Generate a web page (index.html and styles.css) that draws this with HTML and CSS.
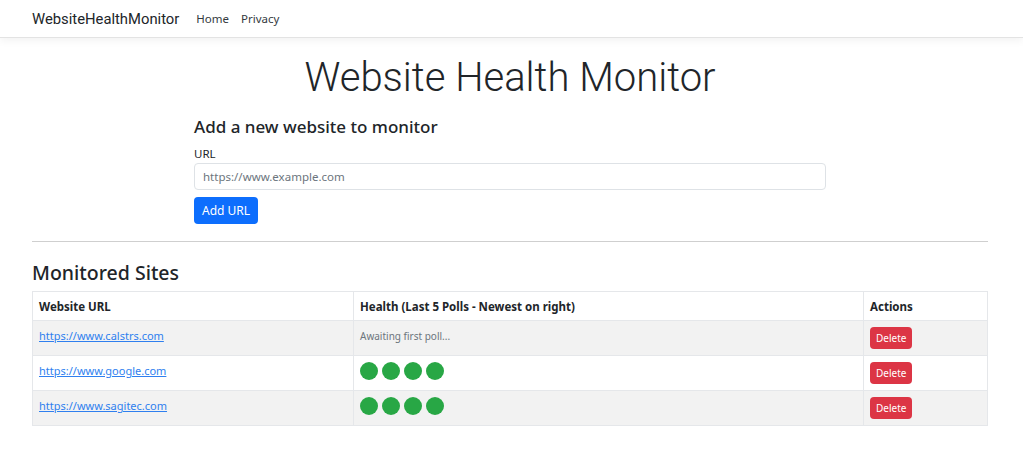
FILE: index.html
```html
<!DOCTYPE html>
<html lang="en">
<head>
<meta charset="utf-8">
<title>WebsiteHealthMonitor</title>
<link rel="stylesheet" href="styles.css">
</head>
<body>
<header class="navbar">
  <div class="nav-inner">
    <a class="brand" href="#">WebsiteHealthMonitor</a>
    <nav class="nav-links">
      <a href="#">Home</a>
      <a href="#">Privacy</a>
    </nav>
  </div>
</header>
<main class="container">
  <h1 class="title">Website Health Monitor</h1>
  <section class="add-form">
    <h4 class="form-title">Add a new website to monitor</h4>
    <label class="form-label" for="url">URL</label>
    <input class="form-control" id="url" type="text" placeholder="https://www.example.com">
    <button class="btn btn-primary">Add URL</button>
  </section>
  <hr class="divider">
  <h3 class="section-title">Monitored Sites</h3>
  <table class="sites">
    <thead>
      <tr>
        <th class="col-url">Website URL</th>
        <th class="col-health">Health (Last 5 Polls - Newest on right)</th>
        <th class="col-actions">Actions</th>
      </tr>
    </thead>
    <tbody>
      <tr class="striped">
        <td><a href="#">https://www.calstrs.com</a></td>
        <td><span class="awaiting">Awaiting first poll...</span></td>
        <td><button class="btn btn-danger">Delete</button></td>
      </tr>
      <tr>
        <td><a href="#">https://www.google.com</a></td>
        <td><div class="dots"><span class="dot"></span><span class="dot"></span><span class="dot"></span><span class="dot"></span></div></td>
        <td><button class="btn btn-danger">Delete</button></td>
      </tr>
      <tr class="striped">
        <td><a href="#">https://www.sagitec.com</a></td>
        <td><div class="dots"><span class="dot"></span><span class="dot"></span><span class="dot"></span><span class="dot"></span></div></td>
        <td><button class="btn btn-danger">Delete</button></td>
      </tr>
    </tbody>
  </table>
</main>
</body>
</html>
```
FILE: styles.css
```css
* { box-sizing: border-box; }
html, body { margin: 0; padding: 0; }
body {
  font-family: "Noto Sans", "Open Sans", sans-serif;
  color: #212529;
  background: #fff;
  font-size: 12px;
}
.navbar {
  height: 38px;
  border-bottom: 1px solid #e3e3e3;
  box-shadow: 0 3px 8px rgba(0,0,0,0.05);
  background: #fff;
}
.nav-inner {
  height: 37px;
  padding: 0 33px 0 32px;
  display: flex;
  align-items: center;
}
.brand {
  font-family: Roboto, "Noto Sans", sans-serif;
  font-size: 14.8px;
  color: #212529;
  text-decoration: none;
  margin-right: 17px;
}
.nav-links { display: flex; gap: 12px; }
.nav-links a {
  font-size: 11.5px;
  color: #343a40;
  text-decoration: none;
}
.container {
  padding: 0 35px 0 32px;
}
.title {
  margin: 14px 0 0;
  text-align: center;
  font-family: Roboto, "Noto Sans", sans-serif;
  font-size: 40px;
  font-weight: 300;
  line-height: 52px;
}
.add-form {
  width: 632px;
  margin: 12px 0 0 162px;
  display: flex;
  flex-direction: column;
  align-items: flex-start;
}
.form-title {
  margin: 0;
  font-size: 17px;
  font-weight: 500;
  line-height: 22px;
}
.form-label {
  margin-top: 8px;
  font-size: 11.5px;
  line-height: 16px;
}
.form-control {
  margin-top: 1px;
  width: 100%;
  height: 27px;
  border: 1px solid #dee2e6;
  border-radius: 4px;
  padding: 0 8px;
  font: inherit;
  font-size: 11.5px;
  color: #212529;
}
.form-control::placeholder { color: #6c757d; }
.btn {
  border: 0;
  border-radius: 4px;
  font-family: inherit;
  color: #fff;
  cursor: pointer;
}
.btn-primary {
  margin-top: 7px;
  height: 27px;
  padding: 0 8px;
  background: #0d6efd;
  font-size: 12px;
}
.divider {
  margin: 17px 0 0;
  border: 0;
  border-top: 1px solid #cfcfcf;
}
.section-title {
  margin: 19px 0 0;
  font-size: 19.5px;
  font-weight: 500;
  line-height: 24px;
}
.sites {
  margin-top: 6px;
  width: 100%;
  border-collapse: collapse;
  border: 1px solid #e5e7ea;
}
.sites th, .sites td {
  border: 1px solid #e5e7ea;
  padding: 0 6px;
  text-align: left;
  vertical-align: top;
}
.sites th {
  height: 29px;
  vertical-align: middle;
  font-weight: 700;
  font-size: 11.5px;
}
.sites td {
  height: 35px;
  padding-top: 7px;
  font-size: 11px;
}
.col-url { width: 321px; }
.col-health { width: 510px; }
.striped td { background: #f2f2f2; }
.sites a { color: #2f7fef; }
.awaiting { font-size: 10px; color: #6c757d; }
.dots { display: flex; gap: 4px; margin-top: -1px; }
.dot {
  width: 18px;
  height: 18px;
  border-radius: 50%;
  background: #28a745;
}
.btn-danger {
  height: 22px;
  padding: 0 6px;
  margin-top: -1px;
  background: #dc3545;
  font-size: 10px;
}
```
